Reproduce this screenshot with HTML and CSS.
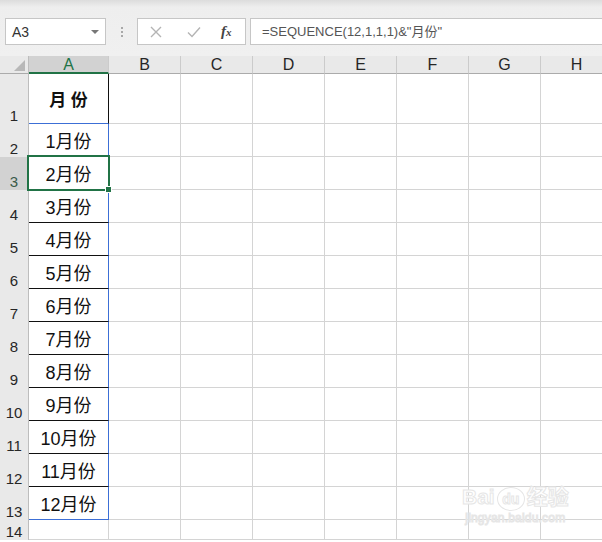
FILE: index.html
```html
<!DOCTYPE html>
<html lang="zh-CN">

<head>
    <meta charset="UTF-8">
    <title>Excel SEQUENCE</title>
    <link rel="stylesheet" href="styles.css">
</head>

<body>
    <!-- 编辑栏 -->
    <div class="toolbar">
        <div class="namebox">
            <span>A3</span>
            <span class="caret"></span>
        </div>
        <div class="grip"><i></i><i></i><i></i></div>
        <div class="fx-buttons">
            <svg class="btn-x" viewBox="0 0 12 12"><path d="M1 1 11 11M11 1 1 11"></path></svg>
            <svg class="btn-ok" viewBox="0 0 14 12"><path d="M1 6.5 5 10.5 13 1.5"></path></svg>
            <span class="fx">f<sub>x</sub></span>
        </div>
        <div class="formula">=SEQUENCE(12,1,1,1)&amp;"月份"</div>
    </div>

    <!-- 工作表 -->
    <div class="sheet">
        <div class="corner"><span></span></div>
        <div class="ch sel">A</div><div class="ch">B</div><div class="ch">C</div><div class="ch">D</div><div class="ch">E</div><div class="ch">F</div><div class="ch">G</div><div class="ch">H</div>

        <div class="rh">1</div><div class="c a head">月 份</div><div class="c"></div><div class="c"></div><div class="c"></div><div class="c"></div><div class="c"></div><div class="c"></div><div class="c"></div>
        <div class="rh">2</div><div class="c a">1月份</div><div class="c"></div><div class="c"></div><div class="c"></div><div class="c"></div><div class="c"></div><div class="c"></div><div class="c"></div>
        <div class="rh sel">3</div><div class="c a">2月份</div><div class="c"></div><div class="c"></div><div class="c"></div><div class="c"></div><div class="c"></div><div class="c"></div><div class="c"></div>
        <div class="rh">4</div><div class="c a">3月份</div><div class="c"></div><div class="c"></div><div class="c"></div><div class="c"></div><div class="c"></div><div class="c"></div><div class="c"></div>
        <div class="rh">5</div><div class="c a">4月份</div><div class="c"></div><div class="c"></div><div class="c"></div><div class="c"></div><div class="c"></div><div class="c"></div><div class="c"></div>
        <div class="rh">6</div><div class="c a">5月份</div><div class="c"></div><div class="c"></div><div class="c"></div><div class="c"></div><div class="c"></div><div class="c"></div><div class="c"></div>
        <div class="rh">7</div><div class="c a">6月份</div><div class="c"></div><div class="c"></div><div class="c"></div><div class="c"></div><div class="c"></div><div class="c"></div><div class="c"></div>
        <div class="rh">8</div><div class="c a">7月份</div><div class="c"></div><div class="c"></div><div class="c"></div><div class="c"></div><div class="c"></div><div class="c"></div><div class="c"></div>
        <div class="rh">9</div><div class="c a">8月份</div><div class="c"></div><div class="c"></div><div class="c"></div><div class="c"></div><div class="c"></div><div class="c"></div><div class="c"></div>
        <div class="rh">10</div><div class="c a">9月份</div><div class="c"></div><div class="c"></div><div class="c"></div><div class="c"></div><div class="c"></div><div class="c"></div><div class="c"></div>
        <div class="rh">11</div><div class="c a">10月份</div><div class="c"></div><div class="c"></div><div class="c"></div><div class="c"></div><div class="c"></div><div class="c"></div><div class="c"></div>
        <div class="rh">12</div><div class="c a">11月份</div><div class="c"></div><div class="c"></div><div class="c"></div><div class="c"></div><div class="c"></div><div class="c"></div><div class="c"></div>
        <div class="rh">13</div><div class="c a last">12月份</div><div class="c"></div><div class="c"></div><div class="c"></div><div class="c"></div><div class="c"></div><div class="c"></div><div class="c"></div>
        <div class="rh">14</div><div class="c"></div><div class="c"></div><div class="c"></div><div class="c"></div><div class="c"></div><div class="c"></div><div class="c"></div><div class="c"></div>

        <!-- 选中单元格 A3 -->
        <div class="selection"></div>
        <div class="fill-handle"></div>
    </div>

    <!-- 水印 -->
    <div class="watermark">
        <div class="wm-top">Bai<span class="wm-du">du</span>经验</div>
        <div class="wm-url">jingyan.baidu.com</div>
    </div>
</body>

</html>
```

FILE: styles.css
```css
/* 基础 */
body {
    margin: 0;
    width: 602px;
    height: 542px;
    overflow: hidden;
    background: #fff;
    font-family: 'Liberation Sans', 'Noto Sans CJK SC', sans-serif;
    position: relative;
}

/* 编辑栏 */
.toolbar {
    height: 56px;
    box-sizing: border-box;
    padding: 18px 0 0 5px;
    display: flex;
    align-items: flex-start;
    background: linear-gradient(#dcdcdc, #eeeeee 7px, #f0f0f0);
}

.namebox,
.fx-buttons,
.formula {
    height: 27px;
    box-sizing: border-box;
    background: #fff;
    border: 1px solid #c6c6c6;
}

.namebox {
    width: 101px;
    display: flex;
    align-items: center;
    justify-content: space-between;
    padding: 0 6px 0 6px;
    font-size: 14px;
    color: #333;
}

.caret {
    width: 0;
    height: 0;
    border-left: 4px solid transparent;
    border-right: 4px solid transparent;
    border-top: 4px solid #777;
}

.grip {
    width: 31px;
    height: 27px;
    display: flex;
    flex-direction: column;
    align-items: center;
    justify-content: center;
    gap: 2px;
}

.grip i {
    width: 2px;
    height: 2px;
    background: #a8a8a8;
}

.fx-buttons {
    width: 109px;
    display: flex;
    align-items: center;
    padding-left: 12px;
}

.fx-buttons svg {
    fill: none;
    stroke: #b4b4b4;
    stroke-width: 1.4;
}

.btn-x {
    width: 12px;
    height: 12px;
}

.btn-ok {
    width: 14px;
    height: 12px;
    margin-left: 25px;
}

.fx {
    margin-left: 20px;
    font-family: 'Liberation Serif', serif;
    font-style: italic;
    font-weight: bold;
    font-size: 15px;
    color: #444;
}

.fx sub {
    font-size: 11px;
    vertical-align: 0;
}

.formula {
    flex: 1;
    margin-left: 4px;
    border-right: none;
    padding-left: 11px;
    font-size: 13px;
    line-height: 25px;
    color: #555;
    white-space: nowrap;
}

/* 工作表网格 */
.sheet {
    position: relative;
    width: 602px;
    overflow: hidden;
    display: grid;
    grid-template-columns: 29px 80px repeat(7, 72px);
    grid-template-rows: 18px 50px repeat(12, 33px) 20px;
}

.sheet > div {
    box-sizing: border-box;
}

.corner {
    background: #e9e9e9;
    border-right: 1px solid #bdbdbd;
    border-bottom: 1px solid #ababab;
    display: flex;
    justify-content: flex-end;
    align-items: flex-end;
    padding: 0 3px 2px 0;
}

.corner span {
    width: 11px;
    height: 11px;
    background: #b8b8b8;
    clip-path: polygon(100% 0, 100% 100%, 0 100%);
}

.ch {
    background: #e9e9e9;
    border-right: 1px solid #cbcbcb;
    border-bottom: 1px solid #ababab;
    font-size: 16px;
    color: #262626;
    text-align: center;
    line-height: 18px;
}

.ch.sel {
    background: #d2d2d2;
    color: #217346;
    border-bottom: 2px solid #217346;
    line-height: 17px;
}

.rh {
    background: #e9e9e9;
    border-right: 1px solid #bdbdbd;
    border-bottom: 1px solid #cbcbcb;
    font-size: 15px;
    color: #262626;
    display: flex;
    justify-content: center;
    align-items: flex-end;
    margin-bottom: -1px;
}

.rh.sel {
    background: #d2d2d2;
    color: #3a5a48;
}

.c {
    border-right: 1px solid #d4d4d4;
    border-bottom: 1px solid #d4d4d4;
}

/* A 列数据 */
.a {
    display: flex;
    justify-content: center;
    align-items: center;
    padding-top: 0;
    font-size: 18px;
    color: #111;
    border-right: 1px solid #3c6fd6;
    border-bottom: 1px solid #111;
}

.a.head {
    font-weight: bold;
    font-size: 17px;
    border-right: 1px solid #111;
    border-bottom: 1px solid #3c6fd6;
    padding-top: 0;
}

.a.last {
    border-bottom: 1px solid #3c6fd6;
}

/* 选中框 */
.selection {
    position: absolute;
    left: 27px;
    top: 99px;
    width: 83px;
    height: 36px;
    box-sizing: border-box;
    border: 2px solid #217346;
}

.fill-handle {
    position: absolute;
    left: 105px;
    top: 130px;
    width: 7px;
    height: 7px;
    box-sizing: border-box;
    background: #217346;
    border: 1px solid #fff;
}

/* 水印 */
.watermark {
    position: absolute;
    left: 462px;
    top: 484px;
    color: #fff;
    -webkit-text-stroke: 1px #e6e6e6;
    text-align: center;
}

.wm-top {
    font-size: 21px;
    font-weight: bold;
    line-height: 26px;
    white-space: nowrap;
}

.wm-du {
    display: inline-block;
    font-size: 14px;
    line-height: 22px;
    width: 26px;
    border: 1px solid #e6e6e6;
    border-radius: 50%;
    margin: 0 2px;
}

.wm-url {
    font-size: 12px;
    line-height: 14px;
    letter-spacing: 0.2px;
}
```
